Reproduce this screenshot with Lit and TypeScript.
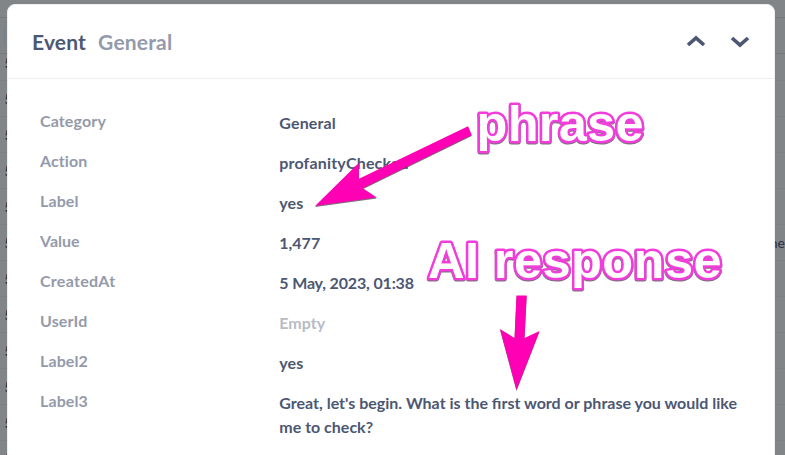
import { LitElement, html, css, svg } from "lit";
import { customElement } from "lit/decorators.js";
import { styleMap } from "lit/directives/style-map.js";

interface Field {
  name: string;
  value: string;
  nameTracking?: number;
  valueTracking?: number;
}

const FIELDS: Field[] = [
  { name: "Category", value: "General", nameTracking: 0.13, valueTracking: 0.14 },
  { name: "Action", value: "profanityChecked", nameTracking: 0.1, valueTracking: 0.17 },
  { name: "Label", value: "yes", nameTracking: 0.1, valueTracking: 0.1 },
  { name: "Value", value: "1,477" },
  { name: "CreatedAt", value: "5 May, 2023, 01:38", nameTracking: 0.28, valueTracking: -0.16 },
  { name: "UserId", value: "", nameTracking: 0.15 },
  { name: "Label2", value: "yes", nameTracking: 0.1, valueTracking: 0.1 },
  { name: "Label3", value: "Great, let's begin. What is the first word or phrase you would like me to check?", nameTracking: 0.1 },
];

const NOTES = [
  { text: "phrase", x: 476.5, y: 141.2, width: 167 },
  { text: "AI response", x: 428, y: 277.6, width: 293.5 },
];

const ARROWS = [
  "M468 126.2 L471.8 135 L362.8 188.3 L376.8 197.5 L315 206 L358.7 163 L359 178.8 Z",
  "M516.5 295.5 L526.7 295.5 L524.5 338 L539.5 331 L516.5 390 L500 329 L514.5 338 Z",
];

@customElement("backdrop-table")
export class BackdropTable extends LitElement {
  static styles = css`
    :host { display: block; background: #828588; color: #2c3245; }
    .bar { box-sizing: border-box; height: 18px; border-bottom: 1px solid #75797c; }
    .head { height: 36px; padding: 6px 4px; }
    .button { height: 24px; box-sizing: border-box; border: 1px solid #74818a; border-radius: 5px; width: 90px; }
    .head + .row { height: 27px; }
    .row {
      box-sizing: border-box; height: 36px; padding: 0 0 0 4.5px;
      display: flex; align-items: center; justify-content: space-between;
      border-bottom: 1px solid #7c8083; font-size: 14px; font-weight: 700; white-space: nowrap;
    }
    .first { align-items: flex-start; line-height: 18px; }
    .end { font-weight: 400; }
  `;
  render() {
    return html`
      <div class="bar"></div>
      <div class="bar head"><div class="button"></div></div>
      <div class="row first"><span>5</span></div>
      ${Array.from({ length: 11 }, (_, i) => html`
        <div class="row"><span>5</span><span class="end">${i === 4 ? "One" : ""}</span></div>`)}
    `;
  }
}

@customElement("app-root")
export class AppRoot extends LitElement {
  static styles = css`
    :host {
      display: block; position: relative; width: 785px; height: 455px; overflow: hidden;
      background: #828588; font-family: Lato, sans-serif; font-weight: 700; color: #4c5773;
    }
    backdrop-table { position: absolute; inset: 0; overflow: hidden; }
    .modal {
      position: relative; box-sizing: border-box; margin: 4px 10px 0 7px; height: 470px;
      background: #fff; border-radius: 8px; border: 1px solid #edeeee;
    }
    header {
      box-sizing: border-box; height: 74px; padding: 0 24px; border-bottom: 1px solid #edeeee;
      display: flex; align-items: center; font-size: 21px; line-height: 26px; letter-spacing: 0.18px;
    }
    .sub { margin-left: 12px; color: #949aab; flex: 1; }
    .nav { display: flex; gap: 24px; margin-top: -2px; }
    .nav svg { display: block; }
    .fields { padding: 32px; font-size: 16px; line-height: 24px; }
    .field { display: grid; grid-template-columns: 239.3px 465px; margin-bottom: 16px; }
    .name { color: #949aab; margin-top: -2px; height: 24px; }
    .empty { color: #b8bbc3; }
    .notes { position: absolute; inset: 0; filter: drop-shadow(0.4px 1px 0.4px rgba(70, 70, 70, 0.75)); }
    .arrow { fill: #ff00b4; }
    .note {
      font: 700 50.5px "Liberation Sans", Arial, sans-serif; fill: #fff;
      stroke: #f23ddc; stroke-width: 5px; stroke-linejoin: round; paint-order: stroke;
    }
  `;

  private chevron(d: string) {
    return html`<svg width="20" height="20" viewBox="0 0 20 20" fill="none" stroke="#4c5773" stroke-width="3.6"><path d=${d}></path></svg>`;
  }

  private tracking(value = 0) {
    return styleMap({ letterSpacing: `${value}px` });
  }

  render() {
    return html`
      <backdrop-table></backdrop-table>
      <div class="modal">
        <header>
          <span>Event</span><span class="sub">General</span>
          <div class="nav">
            ${this.chevron("M2 14 L10 6.8 L18 14")}
            ${this.chevron("M2 7 L10 14.2 L18 7")}
          </div>
        </header>
        <div class="fields">
          ${FIELDS.map((f) => html`
            <div class="field">
              <span class="name" style=${this.tracking(f.nameTracking)}>${f.name}</span>
              <span class=${f.value ? "value" : "empty"} style=${this.tracking(f.valueTracking)}>${f.value || "Empty"}</span>
            </div>`)}
        </div>
      </div>
      <svg class="notes" width="785" height="455" viewBox="0 0 785 455">
        ${ARROWS.map((d) => svg`<path class="arrow" d=${d}></path>`)}
        ${NOTES.map((n) => svg`<text class="note" x=${n.x} y=${n.y} textLength=${n.width}>${n.text}</text>`)}
      </svg>
    `;
  }
}
